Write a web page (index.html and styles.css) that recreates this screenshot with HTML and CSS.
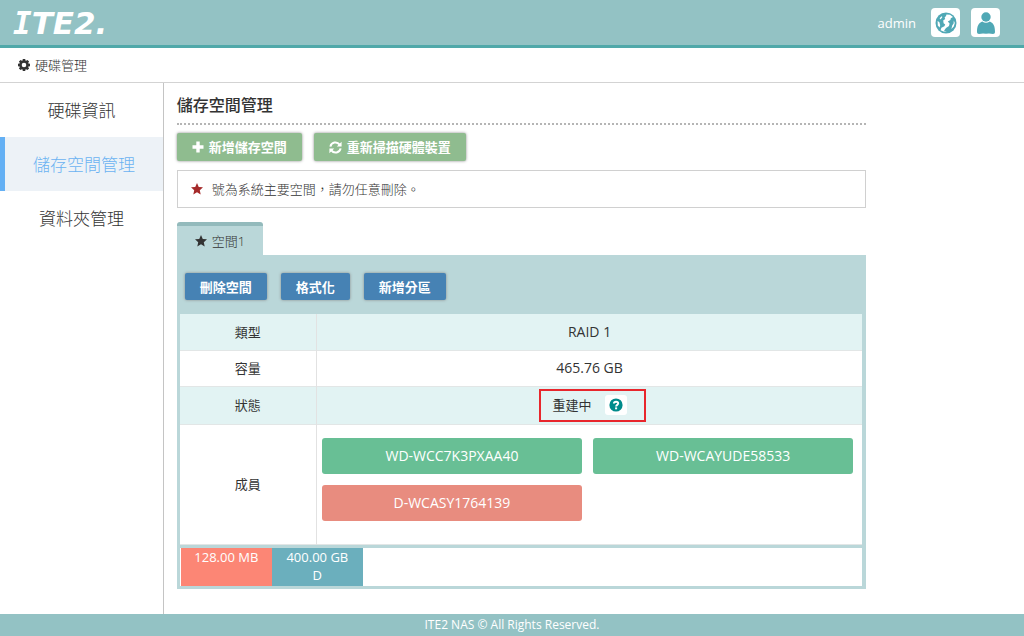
FILE: index.html
```html
<!DOCTYPE html>
<html lang="zh-Hant">
<head>
<meta charset="utf-8">
<meta name="viewport" content="width=device-width, initial-scale=1">
<title>ITE2 NAS</title>
<link rel="stylesheet" href="styles.css">
</head>
<body>
<header class="topbar">
  <a class="logo" href="#"><span class="slab">I</span>TE2.</a>
  <div class="user">
    <span class="user-name">admin</span>
    <button class="icon-btn" type="button" aria-label="語言">
      <svg width="22" height="22" viewBox="0 0 22 22"><circle cx="11" cy="11" r="10.500" fill="#50a8b5"/><path fill="#fff" d="M11.500 2.400 15 2.800 18 5 15.800 6.200 15.400 8 12.800 9.600 14.600 11.400 14 14 11 16 9 18.800 12 19.600 8.400 19.600 5.600 18.200 6.400 15.800 9.400 14.200 10.200 12.400 8.600 11.200 8.200 8.600 10.200 7 9.600 5.400 11 4ZM2.600 9 4.400 10.200 5.200 13.200 4.600 15.600 2.800 13.600ZM4.600 6.200 6.600 4.200 7.400 5 5.600 7.400ZM18.800 8.400 19.800 11 18.800 14.600 16.400 17 17.200 13.600 18.600 11.400Z"/></svg>
    </button>
    <button class="icon-btn" type="button" aria-label="使用者">
      <svg width="22" height="24" viewBox="0 0 22 24"><circle cx="11" cy="6" r="4.700" fill="#50a8b5"/><path fill="#50a8b5" d="M7.200 10.400Q11 13 14.800 10.400C18.600 12 20 15 20 21.200Q20 23 18 23 14.500 22.200 11 22.800 7.500 22.200 4 23 2 23 2 21.200C2 15 3.400 12 7.200 10.400Z"/></svg>
    </button>
  </div>
</header>

<div class="crumb">
  <svg width="12" height="12" viewBox="0 0 12 12"><g fill="#333"><path id="tooth" d="M4.800 0h2.400l.5 2.500h-3.400zM4.800 12h2.400l.5-2.500h-3.400zM0 4.800v2.400l2.500.5v-3.400zM12 4.800v2.400l-2.500.5v-3.400z"/><use href="#tooth" transform="rotate(45 6 6)"/></g><circle cx="6" cy="6" r="3.400" fill="none" stroke="#333" stroke-width="2.200"/></svg>
  <span>硬碟管理</span>
</div>

<div class="body">
  <nav class="side">
    <a href="#">硬碟資訊</a>
    <a class="active" href="#">儲存空間管理</a>
    <a href="#">資料夾管理</a>
  </nav>

  <main class="main">
    <h1>儲存空間管理</h1>
    <div class="actions">
      <button class="btn green" type="button">
        <svg width="12" height="12" viewBox="0 0 12 12"><path fill="#fff" d="M4.300.5h3.400v3.800h3.800v3.400H7.700v3.800H4.300V7.700H.5V4.300h3.800z"/></svg>
        <span>新增儲存空間</span>
      </button>
      <button class="btn green" type="button">
        <svg width="13" height="13" viewBox="0 0 13 13"><g fill="none" stroke="#fff" stroke-width="2"><path d="M1.400 5.600A5.100 5.100 0 0 1 10.600 3.600"/><path d="M11.600 7.400A5.100 5.100 0 0 1 2.400 9.400"/></g><path fill="#fff" d="M12.600.8v4.800H7.800zM.4 12.200V7.400h4.800z"/></svg>
        <span>重新掃描硬體裝置</span>
      </button>
    </div>

    <p class="notice">
      <svg width="12" height="12" viewBox="0 0 12 12"><path fill="#a52a2a" d="M6 0l1.750 3.900 4.250.45-3.200 2.850.9 4.200L6 9.250 2.300 11.400l.9-4.200L0 4.350l4.250-.45z"/></svg>
      <span>號為系統主要空間，請勿任意刪除。</span>
    </p>

    <button class="tab" type="button">
      <svg width="12" height="12" viewBox="0 0 12 12"><path fill="#333" d="M6 0l1.750 3.900 4.250.45-3.200 2.850.9 4.200L6 9.250 2.300 11.400l.9-4.200L0 4.350l4.250-.45z"/></svg>
      <span>空間1</span>
    </button>
    <section class="panel">
      <div class="panel-actions">
        <button class="btn blue" type="button">刪除空間</button>
        <button class="btn blue" type="button">格式化</button>
        <button class="btn blue" type="button">新增分區</button>
      </div>
      <table class="info">
        <tbody>
          <tr><th scope="row">類型</th><td>RAID 1</td></tr>
          <tr><th scope="row">容量</th><td>465.76 GB</td></tr>
          <tr><th scope="row">狀態</th><td class="state-cell"><span class="state">重建中
            <button class="help" type="button" aria-label="說明"><svg width="14" height="14" viewBox="0 0 14 14"><circle cx="7" cy="7" r="6.600" fill="#008b8b"/><path d="M4.900 5.500C5 3.200 9.200 3.300 9.200 5.500 9.200 6.900 7.100 6.900 7.100 8.500" fill="none" stroke="#fff" stroke-width="1.900"/><rect x="6.100" y="9.400" width="2" height="1.900" fill="#fff"/></svg></button>
          </span></td></tr>
          <tr><th scope="row">成員</th><td class="members-cell">
            <div class="members">
              <button class="disk" type="button">WD-WCC7K3PXAA40</button>
              <button class="disk" type="button">WD-WCAYUDE58533</button>
              <button class="disk bad" type="button">D-WCASY1764139</button>
            </div>
          </td></tr>
        </tbody>
      </table>
      <div class="parts">
        <div class="part system">128.00 MB</div>
        <div class="part data">400.00 GB<br>D</div>
      </div>
    </section>
  </main>
</div>

<footer class="foot">ITE2 NAS © All Rights Reserved.</footer>
</body>
</html>
```
FILE: styles.css
```css
* { box-sizing: border-box; }

body {
  margin: 0;
  min-height: 100vh;
  display: flex;
  flex-direction: column;
  background: #fff;
  color: #333;
  font: 13px/18px "Open Sans", "Noto Sans CJK TC", sans-serif;
}

button { font: inherit; color: inherit; border: 0; margin: 0; cursor: pointer; }
a { color: inherit; text-decoration: none; }
svg { display: block; flex: none; }

.topbar {
  display: flex;
  align-items: center;
  justify-content: space-between;
  height: 48px;
  padding: 0 24px 0 13px;
  background: #93c2c4;
  border-bottom: 3px solid #50a8a9;
  color: #fff;
}
.logo { font: italic bold 31px/44px "DejaVu Sans", sans-serif; }
.logo .slab { font-family: "DejaVu Sans Mono", monospace; }
.user { display: flex; align-items: center; gap: 11px; }
.user-name { margin-right: 4px; }
.icon-btn {
  display: flex;
  align-items: center;
  justify-content: center;
  width: 29px;
  height: 29px;
  padding: 0;
  background: #fff;
  border-radius: 4px;
}

.crumb {
  display: flex;
  align-items: center;
  gap: 5px;
  height: 35px;
  padding-left: 18px;
  border-bottom: 1px solid #d3d3d3;
  font-weight: 300;
}

.body { flex: 1; display: flex; }
.side { width: 16%; border-right: 1px solid #c4c4c4; font-weight: 300; }
.side a {
  display: block;
  padding: 16px 0 14px;
  font-size: 17px;
  line-height: 24px;
  text-align: center;
}
.side .active {
  background: #edf2f7;
  color: #6bb2f2;
  border-left: 5px solid #64b0f4;
}

.main { flex: 1; padding: 10px 15.4% 24px 13px; }
h1 {
  margin: 0 0 8px;
  padding-bottom: 6px;
  border-bottom: 2px dotted #b5b5b5;
  font-size: 16px;
  font-weight: 500;
  line-height: 24px;
}
.actions { display: flex; gap: 12px; }
.btn {
  display: flex;
  align-items: center;
  gap: 5px;
  height: 28px;
  padding: 0 15px;
  border-radius: 2px;
  box-shadow: 0 0 3px #888;
  color: #fff;
  font-weight: 700;
}
.green { background: #8fbc8f; }
.blue { background: #4682b4; height: 27px; }

.notice {
  display: flex;
  align-items: center;
  gap: 9px;
  height: 38px;
  margin: 9px 0 14px;
  padding: 0 13px;
  border: 1px solid #d0d0d0;
  font-weight: 300;
}

.tab {
  display: flex;
  align-items: center;
  gap: 5px;
  height: 33px;
  padding: 0 18px;
  background: #bad7d9;
  border-top: 4px solid #93babc;
  border-radius: 3px 3px 0 0;
  font-weight: 300;
}
.panel { padding: 18px 4px 3px 3px; background: #bad7d9; }
.panel-actions { display: flex; gap: 14px; padding: 0 5px 14px; }

.info { width: 100%; border-collapse: collapse; table-layout: fixed; background: #fff; }
.info tr { border-bottom: 1px solid #e2e6e6; }
.info tr:nth-child(odd) { background: #e2f3f3; }
.info th { width: 25%; font-weight: 400; border-right: 1px solid #e2e2e2; }
.info th { width: 20%; }
.info th, .info td { height: 36px; padding: 0; text-align: center; }
.info td { font-size: 14px; }
.info .state-cell { height: 38px; font-size: 13px; }
.state { position: relative; display: inline-flex; align-items: center; gap: 13px; }
/* red highlight drawn round the status */
.state::after {
  content: "";
  position: absolute;
  inset: -6px -19px -7px -14px;
  border: 2px solid #e8262c;
  pointer-events: none;
}
.help {
  display: flex;
  align-items: center;
  justify-content: center;
  width: 22px;
  height: 20px;
  padding: 0;
  background: #fff;
  border-radius: 3px;
}
.info .members-cell { height: 120px; padding: 0 9px 10px 5px; }
.members { display: grid; grid-template-columns: 1fr 1fr; gap: 11px; }
.disk {
  height: 36px;
  padding: 0;
  border-radius: 3px;
  background: #68bf95;
  color: #fff;
}
.disk.bad { background: #e88c7f; }

.parts { display: flex; height: 38px; margin-top: 3px; padding: 0 1px; background: #fff; }
.part { width: 91px; color: #fff; text-align: center; }
.system { background: #fc8675; }
.data { background: #6bafbd; }

.foot {
  height: 22px;
  background: #93c2c4;
  color: #fff;
  font-size: 12px;
  line-height: 22px;
  text-align: center;
}
```
